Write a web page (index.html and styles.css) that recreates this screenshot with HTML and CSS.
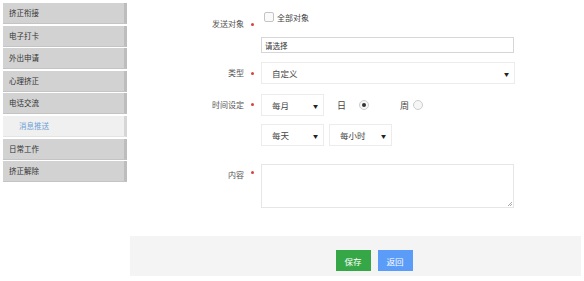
FILE: index.html
```html
<!DOCTYPE html>
<html>
  <head>
    <title>消息推送</title>
    <meta name="viewport" content="width=device-width,initial-scale=1">
    <link rel="stylesheet" href="styles.css">
  </head>
  <body>
    <div class="page">
      <ul class="side-menu">
        <li class="menu-item">挤正衔接</li>
        <li class="menu-item">电子打卡</li>
        <li class="menu-item">外出申请</li>
        <li class="menu-item">心理挤正</li>
        <li class="menu-item">电话交流</li>
        <li class="menu-item sub-item">消息推送</li>
        <li class="menu-item">日常工作</li>
        <li class="menu-item">挤正解除</li>
      </ul>
      <div class="main">
        <form class="push-form">
          <div class="form-row row-target">
            <label class="field-label">发送对象<span class="star"></span></label>
            <div class="field">
              <div class="check-line"><span class="checkbox"></span>全部对象</div>
              <div class="text-input">请选择</div>
            </div>
          </div>
          <div class="form-row row-type">
            <label class="field-label">类型<span class="star"></span></label>
            <div class="field">
              <div class="select select-wide">自定义<span class="caret">▼</span></div>
            </div>
          </div>
          <div class="form-row row-time">
            <label class="field-label">时间设定<span class="star"></span></label>
            <div class="field">
              <div class="inline-line">
                <div class="select select-small">每月<span class="caret">▼</span></div>
                <span class="radio-label day-label">日</span><span class="radio day-radio checked"></span>
                <span class="radio-label week-label">周</span><span class="radio week-radio"></span>
              </div>
              <div class="inline-line second-line">
                <div class="select select-small">每天<span class="caret">▼</span></div>
                <div class="select select-small hour-select">每小时<span class="caret">▼</span></div>
              </div>
            </div>
          </div>
          <div class="form-row row-content">
            <label class="field-label">内容<span class="star"></span></label>
            <div class="field">
              <div class="textarea"><span class="grip"></span></div>
            </div>
          </div>
        </form>
        <div class="footer-bar">
          <button type="button" class="btn btn-save">保存</button>
          <button type="button" class="btn btn-back">返回</button>
        </div>
      </div>
    </div>
  </body>
</html>
```

FILE: styles.css
```css
body {
  margin: 0;
  font-family: "Noto Sans CJK SC", "Liberation Sans", sans-serif;
  font-size: 9px;
  color: #333;
  background: #fff;
}

.page {
  display: flex;
  width: 584px;
  height: 281px;
}

.side-menu {
  list-style: none;
  margin: 0;
  padding: 3px 0 0 3px;
  width: 127px;
  display: flex;
  flex-direction: column;
  gap: 1.6px;
}

.menu-item {
  width: 124px;
  height: 21px;
  line-height: 20px;
  padding-left: 6px;
  box-sizing: border-box;
  background: #d2d2d2;
  border-right: 3px solid #bdbdbd;
  border-bottom: 1px solid #c4c4c4;
  font-size: 7.5px;
  color: #333;
}

.sub-item {
  background: #f0f0f0;
  border-right-color: #d6d6d6;
  border-bottom-color: #e4e4e4;
  color: #6d9fd6;
  padding-left: 16px;
}

.main {
  width: 451px;
  display: flex;
  flex-direction: column;
}

.push-form {
  display: flex;
  flex-direction: column;
  padding-top: 11px;
  height: 225px;
  box-sizing: border-box;
}

.form-row {
  display: flex;
}

.field-label {
  display: flex;
  justify-content: flex-end;
  align-items: flex-start;
  width: 131px;
  box-sizing: border-box;
  padding-right: 7px;
  font-size: 8px;
  color: #555;
}

.star {
  width: 3px;
  height: 3px;
  border-radius: 50%;
  background: #d9413f;
  margin-left: 7px;
  align-self: center;
}

.field {
  display: flex;
  flex-direction: column;
}

.row-target .field-label {
  height: 12px;
  padding-top: 7px;
  line-height: 12px;
}

.row-target .star {
  margin-top: 7px;
}

.check-line {
  display: flex;
  align-items: center;
  height: 12px;
  padding-left: 3px;
  font-size: 8px;
  color: #444;
}

.checkbox {
  width: 8px;
  height: 8px;
  border: 1px solid #c4c4c4;
  border-radius: 2px;
  margin-right: 3px;
  background: #fafafa;
}

.text-input {
  margin-top: 14px;
  width: 253px;
  height: 16px;
  line-height: 15px;
  border: 1px solid #d6d6d6;
  box-sizing: border-box;
  padding-left: 3px;
  font-size: 7.5px;
  color: #333;
}

.row-type {
  margin-top: 9px;
}

.row-type .field-label,
.row-time .field-label {
  height: 22px;
  line-height: 22px;
}

.row-time .field-label {
  height: 21px;
}

.select {
  position: relative;
  height: 22px;
  line-height: 21px;
  border: 1px solid #ececec;
  box-sizing: border-box;
  padding-left: 10px;
  font-size: 8.5px;
  color: #444;
}

.select-wide {
  width: 254px;
}

.select-small {
  width: 63px;
}

.hour-select {
  margin-left: 5px;
}

.caret {
  position: absolute;
  right: 5px;
  top: 0;
  font-size: 5px;
  color: #222;
}

.row-time {
  margin-top: 10px;
}

.inline-line {
  display: flex;
  align-items: center;
}

.radio-label {
  color: #444;
  font-size: 9px;
}

.day-label {
  margin-left: 13px;
}

.week-label {
  margin-left: 31px;
}

.radio {
  width: 8px;
  height: 8px;
  border: 1px solid #cdcdcd;
  border-radius: 50%;
  background: #f6f6f6;
  position: relative;
}

.day-radio {
  margin-left: 13px;
}

.week-radio {
  margin-left: 4px;
}

.radio.checked::after {
  content: "";
  position: absolute;
  left: 2px;
  top: 2px;
  width: 4px;
  height: 4px;
  border-radius: 50%;
  background: #333;
}

.second-line {
  margin-top: 8px;
}

.row-content {
  margin-top: 18px;
}

.row-content .field-label {
  height: 12px;
  padding-top: 5px;
}

.textarea {
  position: relative;
  width: 253px;
  height: 44px;
  border: 1px solid #e6e6e6;
  box-sizing: border-box;
}

.grip {
  position: absolute;
  right: 1px;
  bottom: 1px;
  width: 4px;
  height: 4px;
  background: linear-gradient(135deg, transparent 45%, #aaa 45%, #aaa 55%, transparent 55%, transparent 75%, #aaa 75%, #aaa 85%, transparent 85%);
}

.footer-bar {
  margin-top: 11px;
  height: 40px;
  background: #f4f4f4;
  display: flex;
  justify-content: center;
  align-items: flex-start;
  gap: 7px;
  padding-left: 37px;
  padding-top: 14px;
  box-sizing: border-box;
}

.btn {
  border: 0;
  height: 21px;
  width: 35px;
  font-family: "Noto Sans CJK SC", sans-serif;
  font-size: 8.5px;
  color: #fff;
  padding: 0;
}

.btn-save {
  background: #36a746;
}

.btn-back {
  background: #5a9cf8;
}
```
